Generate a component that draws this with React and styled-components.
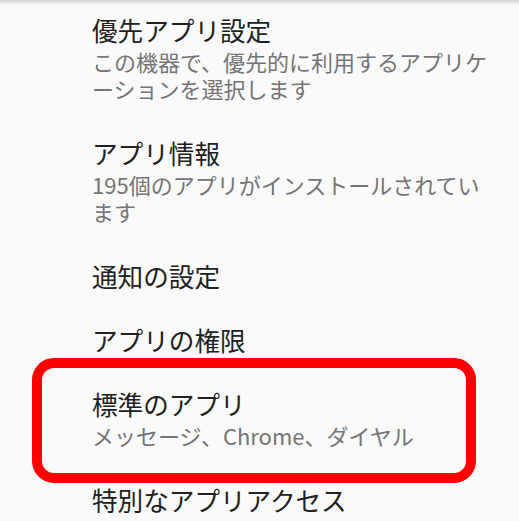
import React from 'react';
import styled, { createGlobalStyle } from 'styled-components';

const GlobalStyle = createGlobalStyle`
  html, body {
    margin: 0;
    padding: 0;
    background: #fafafa;
  }
  body {
    font-family: "Noto Sans CJK JP", "Noto Sans", Roboto, sans-serif;
  }
`;

const Screen = styled.div`
  position: relative;
  width: 519px;
  height: 521px;
  overflow: hidden;
  background: #fafafa;
`;

const TopShadow = styled.div`
  position: absolute;
  top: 0;
  left: 0;
  right: 0;
  height: 5px;
  background: linear-gradient(to bottom, rgba(0, 0, 0, 0.16), rgba(0, 0, 0, 0));
`;

const List = styled.div`
  display: flex;
  flex-direction: column;
`;

const Item = styled.div`
  display: flex;
  flex-direction: column;
  padding: 14px 0 18px 92px;
  width: 405px;
`;

const Title = styled.div`
  font-size: 25.6px;
  line-height: 32px;
  color: #212121;
`;

const Summary = styled.div`
  margin-top: 2px;
  padding-bottom: 3px;
  font-size: 22px;
  line-height: 27px;
  color: #757575;
`;

const Highlight = styled.div`
  position: absolute;
  left: 32px;
  top: 358px;
  width: 444px;
  height: 125px;
  box-sizing: border-box;
  border: 10px solid #ff0000;
  border-radius: 22px;
`;

const items = [
  { title: '優先アプリ設定', summary: 'この機器で、優先的に利用するアプリケーションを選択します' },
  { title: 'アプリ情報', summary: '195個のアプリがインストールされています' },
  { title: '通知の設定' },
  { title: 'アプリの権限' },
  { title: '標準のアプリ', summary: 'メッセージ、Chrome、ダイヤル' },
  { title: '特別なアプリアクセス' },
];

export default function App() {
  return (
    <Screen>
      <GlobalStyle />
      <List>
        {items.map((it) => (
          <Item key={it.title}>
            <Title>{it.title}</Title>
            {it.summary && <Summary>{it.summary}</Summary>}
          </Item>
        ))}
      </List>
      <TopShadow />
      <Highlight />
    </Screen>
  );
}
